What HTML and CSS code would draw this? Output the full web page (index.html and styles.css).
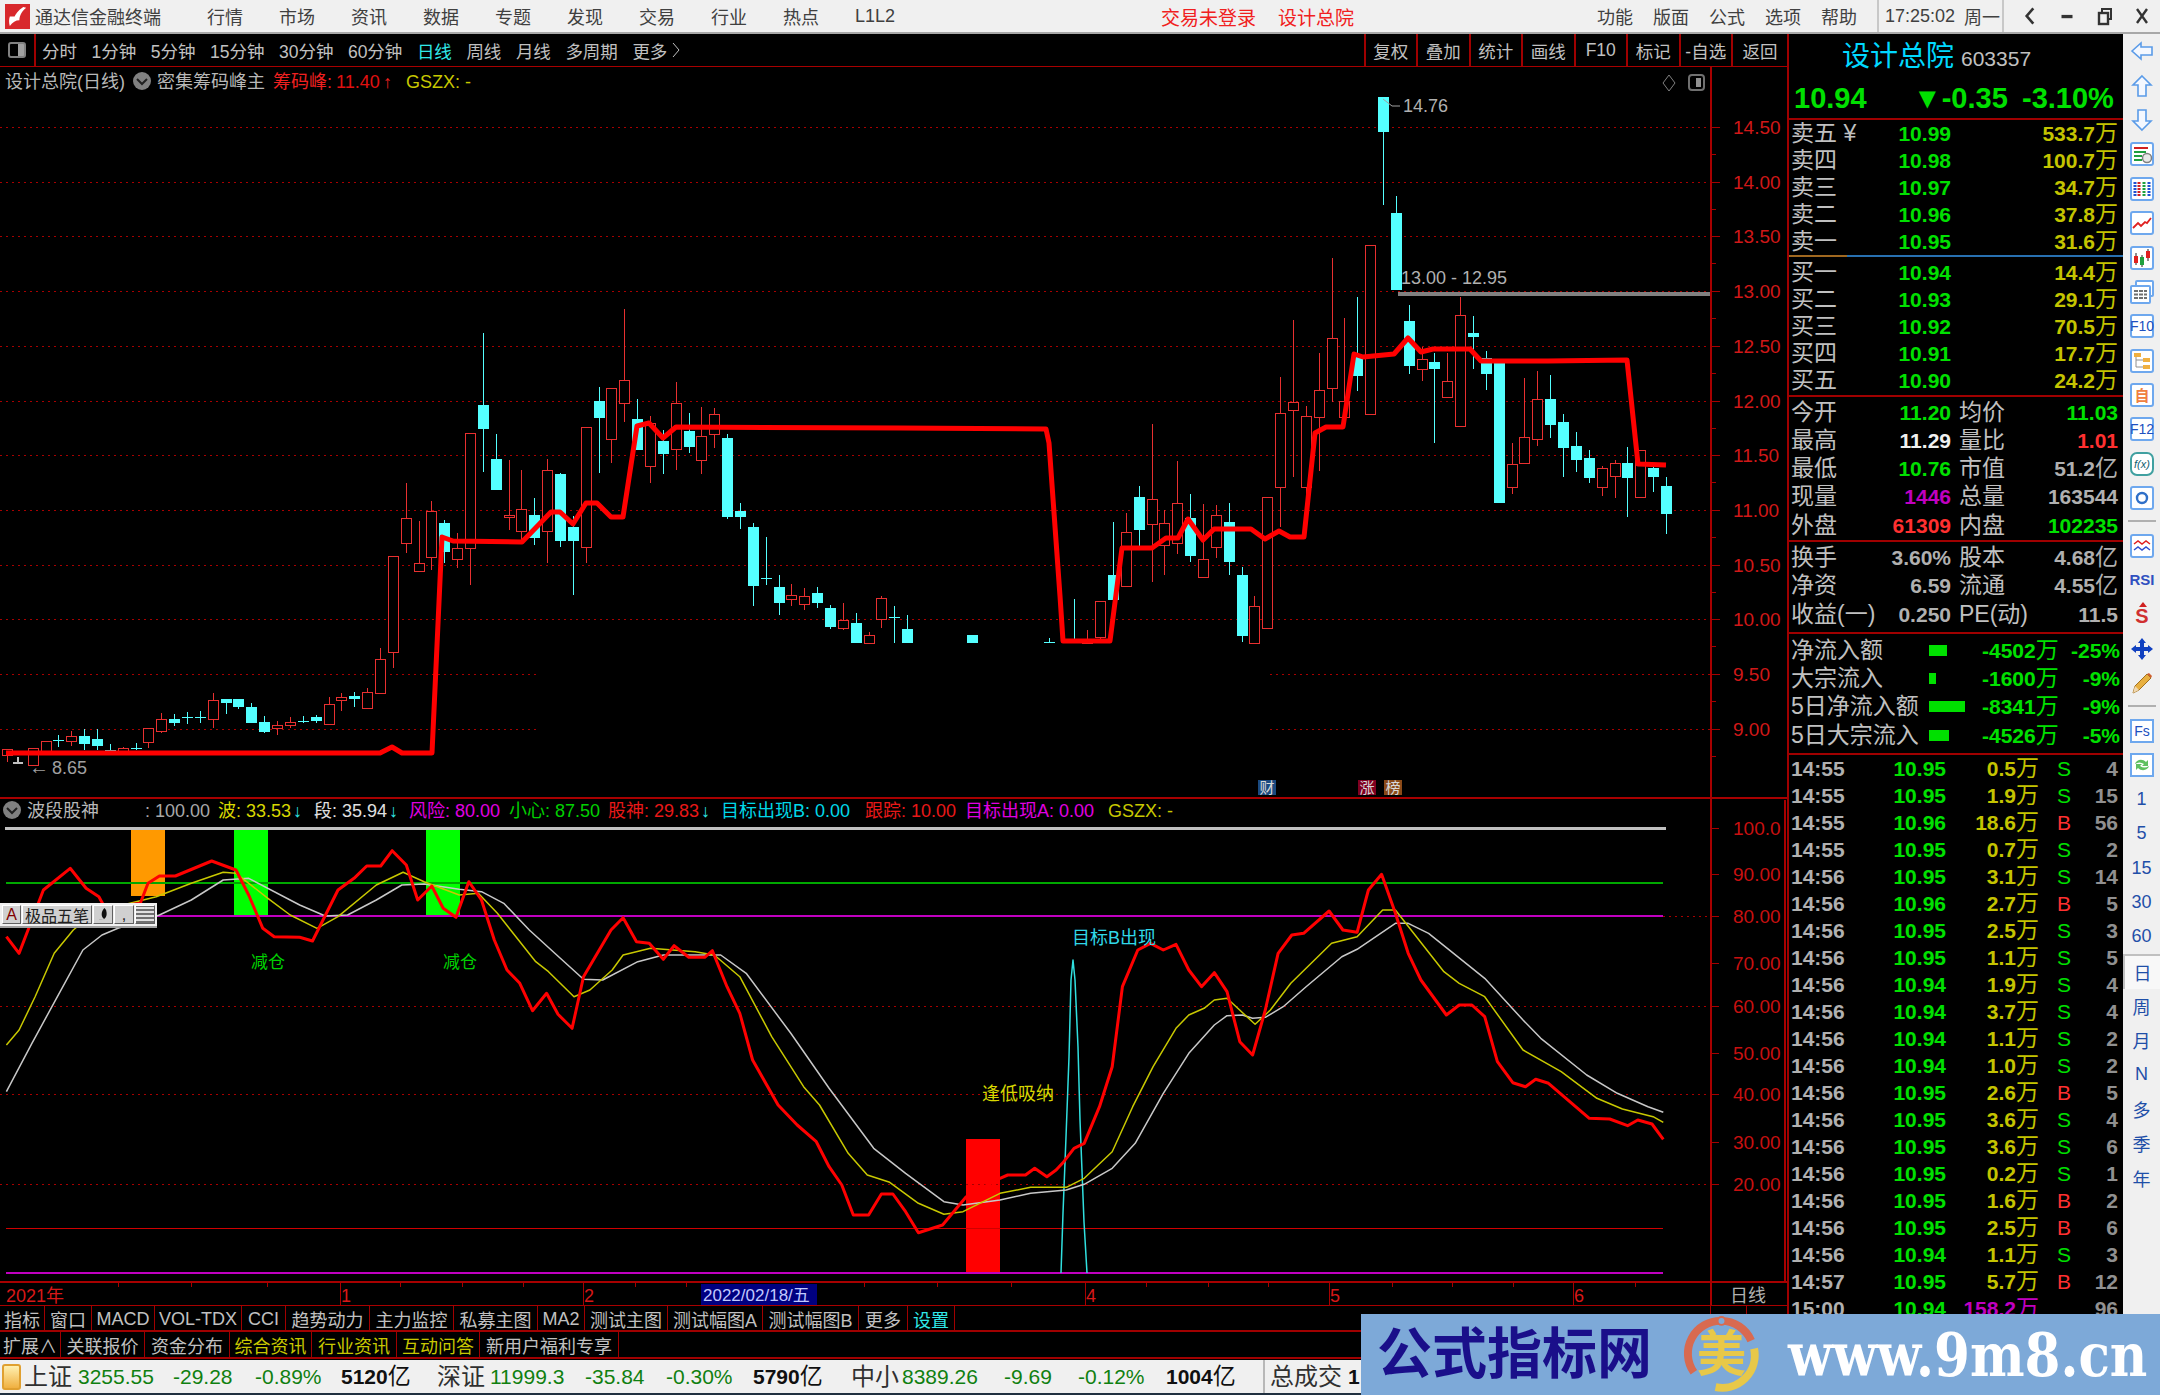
FILE: index.html
```html
<!DOCTYPE html>
<html lang="zh-CN">
<head>
    <meta charset="UTF-8">
    <title>通达信金融终端</title>
    <link rel="stylesheet" href="styles.css">
</head>
<body>
<div class="app">
    <header class="menubar">
        <div class="brand">
            <svg class="brand-logo" viewBox="0 0 26 26"><rect width="26" height="26" fill="#d8282c"/><path d="M19 3 C13 7 11 11 10 13 L5 13 C4 16 4 19 5 23 C8 19 11 17 15 17 C15 14 16 9 22 4 Z" fill="#fff"/></svg>
            <span>通达信金融终端</span>
        </div>
        <nav class="menu-main">
            <span>行情</span><span>市场</span><span>资讯</span><span>数据</span><span>专题</span><span>发现</span><span>交易</span><span>行业</span><span>热点</span><span>L1L2</span>
        </nav>
        <div class="menu-alert"><span>交易未登录</span><span>设计总院</span></div>
        <div class="menu-right">
            <span>功能</span><span>版面</span><span>公式</span><span>选项</span><span>帮助</span>
            <div class="clock"><span>17:25:02</span><span>周一</span></div>
            <div class="win-btns">
                <svg viewBox="0 0 14 20"><path d="M10 3 L4 10 L10 17" fill="none" stroke="#333" stroke-width="2.4"/></svg>
                <svg viewBox="0 0 14 20"><rect x="2" y="9" width="10" height="3" fill="#333"/></svg>
                <svg viewBox="0 0 16 20"><rect x="5" y="3" width="9" height="10" fill="none" stroke="#333" stroke-width="2"/><rect x="2" y="7" width="9" height="11" fill="#f0f0f0" stroke="#333" stroke-width="2.4"/></svg>
                <svg viewBox="0 0 16 20"><path d="M3 3 L13 17 M13 3 L3 17" stroke="#333" stroke-width="2.4"/></svg>
            </div>
        </div>
    </header>

    <div class="main">
        <div class="left">
            <div class="toolbar">
                <div class="toggle"><span class="toggle-box"></span></div>
                <div class="periods">
                    <span>分时</span><span>1分钟</span><span>5分钟</span><span>15分钟</span><span>30分钟</span><span>60分钟</span><span class="cyan">日线</span><span>周线</span><span>月线</span><span>多周期</span>
                    <span class="more">更多<svg viewBox="0 0 8 16"><path d="M1 1 L7 8 L1 15" fill="none" stroke="#c0c0c0"/></svg></span>
                </div>
                <div class="tools">
                    <span>复权</span><span>叠加</span><span>统计</span><span>画线</span><span>F10</span><span>标记</span><span>-自选</span><span class="last">返回</span>
                </div>
            </div>
            <div class="charts">
                <svg id="chart" viewBox="0 66 1787 1240" width="1787" height="1240"></svg>
                <div class="ime">
                    <span class="ime-a">A</span><span class="ime-name">极品五笔</span>
                    <span class="ime-btn"><svg viewBox="0 0 12 16"><path d="M7 1 C3 5 3 11 7 13 C4 14 2 14 1 13 C6 15 11 12 9 4 C9 3 8 2 7 1 Z" fill="#101010"/></svg></span>
                    <span class="ime-btn">,</span><span class="ime-btn ime-kb"></span>
                </div>
            </div>
            <div class="tabs tabs-one">
                <span>指标</span><span>窗口</span><span>MACD</span><span>VOL-TDX</span><span>CCI</span><span>趋势动力</span><span>主力监控</span><span>私募主图</span><span>MA2</span><span>测试主图</span><span>测试幅图A</span><span>测试幅图B</span><span>更多</span><span class="cyan">设置</span><i></i><span></span><span></span>
            </div>
            <div class="tabs tabs-two">
                <span>扩展∧</span><span>关联报价</span><span>资金分布</span><span class="yellow">综合资讯</span><span class="yellow">行业资讯</span><span class="yellow">互动问答</span><span>新用户福利专享</span>
            </div>
        </div>

        <aside class="panel">
            <section class="quote-head">
                <div class="quote-name"><span class="quote-title">设计总院</span><span class="quote-code">603357</span></div>
                <div class="quote-price"><span>10.94</span><span>▼-0.35</span><span>-3.10%</span></div>
            </section>
            <section class="book">
                <div class="row"><span>卖五 ¥</span><b class="g">10.99</b><i></i><b class="y">533.7<u>万</u></b></div>
                <div class="row"><span>卖四</span><b class="g">10.98</b><i></i><b class="y">100.7<u>万</u></b></div>
                <div class="row"><span>卖三</span><b class="g">10.97</b><i></i><b class="y">34.7<u>万</u></b></div>
                <div class="row"><span>卖二</span><b class="g">10.96</b><i></i><b class="y">37.8<u>万</u></b></div>
                <div class="row"><span>卖一</span><b class="g">10.95</b><i></i><b class="y">31.6<u>万</u></b></div>
            </section>
            <div class="book-line"></div>
            <section class="book book-buy">
                <div class="row"><span>买一</span><b class="g">10.94</b><i></i><b class="y">14.4<u>万</u></b></div>
                <div class="row"><span>买二</span><b class="g">10.93</b><i></i><b class="y">29.1<u>万</u></b></div>
                <div class="row"><span>买三</span><b class="g">10.92</b><i></i><b class="y">70.5<u>万</u></b></div>
                <div class="row"><span>买四</span><b class="g">10.91</b><i></i><b class="y">17.7<u>万</u></b></div>
                <div class="row"><span>买五</span><b class="g">10.90</b><i></i><b class="y">24.2<u>万</u></b></div>
            </section>
            <section class="stats">
                <div class="row"><span>今开</span><b class="g">11.20</b><span>均价</span><b class="g">11.03</b></div>
                <div class="row"><span>最高</span><b class="w">11.29</b><span>量比</span><b class="r">1.01</b></div>
                <div class="row"><span>最低</span><b class="g">10.76</b><span>市值</span><b class="s">51.2<u>亿</u></b></div>
                <div class="row"><span>现量</span><b class="m">1446</b><span>总量</span><b class="s">163544</b></div>
                <div class="row"><span>外盘</span><b class="r">61309</b><span>内盘</span><b class="g">102235</b></div>
            </section>
            <section class="finance">
                <div class="row"><span>换手</span><b class="s">3.60%</b><span>股本</span><b class="s">4.68<u>亿</u></b></div>
                <div class="row"><span>净资</span><b class="s">6.59</b><span>流通</span><b class="s">4.55<u>亿</u></b></div>
                <div class="row"><span>收益(一)</span><b class="s">0.250</b><span>PE(动)</span><b class="s">11.5</b></div>
            </section>
            <section class="flows">
                <div class="flow"><span>净流入额</span><em><i style="width:18px"></i></em><b class="g">-4502<u>万</u></b><b class="g">-25%</b></div>
                <div class="flow"><span>大宗流入</span><em><i style="width:7px"></i></em><b class="g">-1600<u>万</u></b><b class="g">-9%</b></div>
                <div class="flow"><span>5日净流入额</span><em><i style="width:36px"></i></em><b class="g">-8341<u>万</u></b><b class="g">-9%</b></div>
                <div class="flow"><span>5日大宗流入</span><em><i style="width:20px"></i></em><b class="g">-4526<u>万</u></b><b class="g">-5%</b></div>
            </section>
            <section class="ticks" id="ticks"></section>
        </aside>

        <aside class="strip">
            <span class="ico"><svg viewBox="0 0 24 24"><path class="arrow" d="M2 12 L11 4 V8 H22 V16 H11 V20 Z"/></svg></span>
            <span class="ico"><svg viewBox="0 0 24 24"><path class="arrow" d="M12 2 L21 11 H16 V22 H8 V11 H3 Z"/></svg></span>
            <span class="ico"><svg viewBox="0 0 24 24"><path class="arrow" d="M12 22 L21 13 H16 V2 H8 V13 H3 Z"/></svg></span>
            <span class="ico"><svg viewBox="0 0 24 24"><rect class="frame" x="1" y="1" width="22" height="22" rx="2"/><path d="M4 6 H18" stroke="#d02020" stroke-width="2"/><path d="M4 10 H16 M4 14 H12 M4 18 H12" stroke="#20a040" stroke-width="2"/><circle cx="17" cy="16" r="4.5" fill="#e8e8e8" stroke="#808080" stroke-width="1.5"/></svg></span>
            <span class="ico"><svg viewBox="0 0 24 24"><rect class="frame" x="1" y="1" width="22" height="22" rx="2"/><path d="M5 5 V19" stroke="#2050d0" stroke-width="3" stroke-dasharray="2 1"/><path d="M9 5 V19" stroke="#d02020" stroke-width="3" stroke-dasharray="2 1"/><path d="M14 5 V19" stroke="#20a040" stroke-width="3" stroke-dasharray="2 1"/><path d="M19 5 V19" stroke="#2050d0" stroke-width="3" stroke-dasharray="2 1"/></svg></span>
            <span class="ico"><svg viewBox="0 0 24 24"><rect class="frame" x="1" y="1" width="22" height="22" rx="2"/><path d="M3 17 L8 12 L11 15 L15 11 L17 12 L21 7" fill="none" stroke="#e02020" stroke-width="1.8"/></svg></span>
            <span class="ico"><svg viewBox="0 0 24 24"><rect class="frame" x="1" y="1" width="22" height="22" rx="2"/><path d="M6 7 V19 M12 9 V21 M18 3 V15" stroke="#202020" stroke-width="1"/><rect x="4" y="10" width="4" height="7" fill="#e02020"/><rect x="10" y="11" width="4" height="8" fill="#20a040"/><rect x="16" y="5" width="4" height="7" fill="#e02020"/></svg></span>
            <span class="ico"><svg viewBox="0 0 24 24"><rect class="frame" x="6" y="1" width="17" height="15" rx="1"/><rect class="frame" x="1" y="6" width="19" height="17" rx="1"/><path d="M4 11 H17 M4 14.5 H17 M4 18 H17" stroke="#707070" stroke-width="2" stroke-dasharray="4 1"/></svg></span>
            <span class="ico"><svg viewBox="0 0 24 24"><rect class="frame" x="1" y="1" width="22" height="22" rx="2"/><text x="12" y="17" class="ico-text">F10</text></svg></span>
            <span class="ico"><svg viewBox="0 0 24 24"><rect class="frame" x="1" y="1" width="22" height="22" rx="2"/><path d="M6 6 V18 H13 M6 11 H13" fill="none" stroke="#909090" stroke-width="1"/><rect x="4" y="4" width="7" height="4" fill="#f0b040"/><rect x="13" y="9" width="7" height="4" fill="#f0b040"/><rect x="13" y="16" width="7" height="4" fill="#f0b040"/></svg></span>
            <span class="ico"><svg viewBox="0 0 24 24"><rect class="frame" x="1" y="1" width="22" height="22" rx="2"/><text x="12" y="18" class="ico-text ico-orange">自</text></svg></span>
            <span class="ico"><svg viewBox="0 0 24 24"><rect class="frame" x="1" y="1" width="22" height="22" rx="2"/><text x="12" y="17" class="ico-text">F12</text></svg></span>
            <span class="ico"><svg viewBox="0 0 24 24"><rect class="frame frame-teal" x="1" y="1" width="22" height="22" rx="6"/><text x="12" y="16" class="ico-text ico-fx">f(x)</text></svg></span>
            <span class="ico"><svg viewBox="0 0 24 24"><rect class="frame" x="1" y="1" width="22" height="22" rx="2"/><circle cx="12" cy="12" r="5" fill="none" stroke="#3070c8" stroke-width="2.4"/></svg></span>
            <span class="strip-sep"></span>
            <span class="ico"><svg viewBox="0 0 24 24"><rect class="frame" x="1" y="1" width="22" height="22" rx="2"/><path d="M4 10 L8 7 L12 10 L16 7 L20 10" fill="none" stroke="#e02020" stroke-width="1.5"/><path d="M4 16 L8 13 L12 16 L16 13 L20 16" fill="none" stroke="#3050d0" stroke-width="1.5"/></svg></span>
            <span class="ico"><svg viewBox="0 0 24 24"><text x="12" y="17" class="ico-text ico-rsi">RSI</text></svg></span>
            <span class="ico"><svg viewBox="0 0 24 24"><path d="M13 0 L17 5 H9 Z" fill="#d02020"/><text x="12" y="21" class="ico-text ico-s">S</text></svg></span>
            <span class="ico"><svg viewBox="0 0 24 24"><path d="M12 1 L16 6 H14 V10 H18 V8 L23 12 L18 16 V14 H14 V18 H16 L12 23 L8 18 H10 V14 H6 V16 L1 12 L6 8 V10 H10 V6 H8 Z" fill="#1040c0"/></svg></span>
            <span class="ico"><svg viewBox="0 0 24 24"><path d="M3 22 L5 15 L17 3 L21 7 L9 19 Z" fill="#e8b040" stroke="#a07020"/><path d="M3 22 L5 15 L9 19 Z" fill="#f0d8b0"/><path d="M17 3 L21 7 L22 5 L19 2 Z" fill="#d06030"/></svg></span>
            <span class="strip-sep"></span>
            <span class="ico"><svg viewBox="0 0 24 24"><rect class="frame" x="1" y="1" width="22" height="22"/><text x="12" y="17" class="ico-text">Fs</text></svg></span>
            <span class="ico"><svg viewBox="0 0 24 24"><rect class="frame" x="1" y="1" width="22" height="22"/><path d="M5 11 C6 7 12 5 16 9 L18 7 V13 H12 L14 11 C11 9 8 9 5 11 Z M19 13 C18 17 12 19 8 15 L6 17 V11 H12 L10 13 C13 15 16 15 19 13 Z" fill="#60c060"/></svg></span>
            <span class="ico-t">1</span>
            <span class="ico-t">5</span>
            <span class="ico-t">15</span>
            <span class="ico-t">30</span>
            <span class="ico-t">60</span>
            <span class="ico-t ico-on">日</span>
            <span class="ico-t">周</span>
            <span class="ico-t">月</span>
            <span class="ico-t">N</span>
            <span class="ico-t">多</span>
            <span class="ico-t">季</span>
            <span class="ico-t">年</span>
        </aside>
    </div>

    <footer class="status">
        <span class="status-icon"></span>
        <span class="idx">上证</span><span class="up">3255.55</span><span class="up">-29.28</span><span class="up">-0.89%</span><span class="amt">5120<u>亿</u></span>
        <span class="idx">深证</span><span class="up">11999.3</span><span class="up">-35.84</span><span class="up">-0.30%</span><span class="amt">5790<u>亿</u></span>
        <span class="idx">中小</span><span class="up">8389.26</span><span class="up">-9.69</span><span class="up">-0.12%</span><span class="amt">1004<u>亿</u></span>
        <span class="status-sep"></span>
        <span class="idx">总成交</span><span class="amt">1</span>
    </footer>

    <div class="watermark">
        <span class="wm-title">公式指标网</span>
        <svg class="wm-logo" viewBox="0 0 80 80">
            <path d="M12 58 A33 33 0 0 1 40 6 A33 33 0 0 1 70 26" fill="none" stroke="#d86a50" stroke-width="8"/>
            <path d="M73 34 A33 33 0 0 1 34 73" fill="none" stroke="#e8c848" stroke-width="8"/>
            <circle cx="40" cy="6" r="4" fill="#7da9d8" stroke="#d86a50" stroke-width="2"/>
            <text x="40" y="57" class="wm-glyph">美</text>
        </svg>
        <span class="wm-url">www.9m8.cn</span>
    </div>
</div>
<script src="chart.js"></script>
</body>
</html>
```

FILE: styles.css
```css
* {
    box-sizing: border-box;
}
body {
    margin: 0;
    background: #000;
    font-family: "Liberation Sans", "Noto Sans CJK SC", sans-serif;
    color: #c0c0c0;
    overflow: hidden;
}
.app {
    position: relative;
    width: 2160px;
    height: 1395px;
    overflow: hidden;
}
.cyan { color: #30e8e8; }
.yellow { color: #c8c800; }

/* top menu */
.menubar {
    display: flex;
    align-items: center;
    height: 34px;
    background: #f0f0f0;
    border-bottom: 2px solid #a8a8a8;
    color: #404040;
    font-size: 18px;
}
.brand {
    display: flex;
    align-items: center;
    gap: 5px;
    width: 207px;
    padding-left: 5px;
}
.brand-logo {
    width: 25px;
    height: 25px;
}
.menu-main {
    display: flex;
    align-items: center;
    width: 954px;
}
.menu-main span {
    width: 72px;
}
.menu-alert {
    display: flex;
    gap: 22px;
    color: #f02020;
    font-size: 19px;
}
.menu-right {
    display: flex;
    align-items: center;
    margin-left: auto;
    width: 563px;
    height: 100%;
}
.menu-right > span {
    width: 56px;
}
.clock {
    display: flex;
    align-items: center;
    gap: 9px;
    width: 127px;
    height: 100%;
    padding-left: 6px;
    border-left: 2px solid #c8c8c8;
    border-right: 2px solid #c8c8c8;
    white-space: nowrap;
}
.win-btns {
    display: flex;
    justify-content: space-between;
    flex: 1;
    padding: 0 10px 0 18px;
}
.win-btns svg {
    width: 16px;
    height: 22px;
}

.main {
    display: flex;
    height: 1326px;
}
.left {
    width: 1787px;
}

/* period toolbar */
.toolbar {
    display: flex;
    height: 32px;
    font-size: 17.5px;
}
.toggle {
    display: flex;
    align-items: center;
    justify-content: center;
    width: 36px;
    border-right: 2px solid #a00000;
}
.toggle-box {
    width: 18px;
    height: 16px;
    border: 2px solid #808080;
    border-radius: 3px;
    background: linear-gradient(90deg, #000 55%, #a0a0a0 55%);
}
.periods {
    display: flex;
    align-items: center;
    gap: 14.5px;
    padding-left: 6px;
    white-space: nowrap;
}
.more {
    display: flex;
    align-items: center;
    gap: 5px;
}
.more svg {
    width: 8px;
    height: 16px;
}
.tools {
    display: flex;
    margin-left: auto;
    height: 100%;
}
.tools span {
    display: flex;
    align-items: center;
    justify-content: center;
    width: 52.5px;
    border-left: 2px solid #a00000;
    white-space: nowrap;
}
.tools .last {
    width: 56px;
}

.charts {
    position: relative;
    height: 1240px;
}
#chart {
    display: block;
}
#chart text {
    font-family: "Liberation Sans", "Noto Sans CJK SC", sans-serif;
}

/* input method widget lying over the chart */
.ime {
    position: absolute;
    left: 0;
    top: 837px;
    display: flex;
    align-items: center;
    width: 157px;
    height: 25px;
    padding: 2px;
    gap: 1px;
    background: #f0f0f0;
    border-bottom: 2px solid #a0a0a0;
    color: #202020;
    font-size: 16px;
}
.ime span {
    display: flex;
    align-items: center;
    justify-content: center;
    height: 100%;
    background: #d0d0d0;
    border-top: 1px solid #fff;
    border-left: 1px solid #fff;
    border-right: 1px solid #606060;
    border-bottom: 1px solid #606060;
}
.ime-a {
    width: 19px;
    color: #800000;
}
.ime-name {
    width: 70px;
    white-space: nowrap;
}
.ime-btn {
    width: 20px;
    line-height: 1;
}
.ime-btn svg {
    width: 11px;
    height: 15px;
}
.ime .ime-kb {
    background: repeating-linear-gradient(0deg, #707070 0 2px, #e0e0e0 2px 4px);
}

/* tab rows under the chart */
.tabs {
    display: grid;
    font-size: 18px;
    border-bottom: 2px solid #a00000;
    white-space: nowrap;
}
.tabs-one {
    grid-template-columns: 45px 47px 63px 87px 44px 84px 84px 84px 47px 83px 95px 96px 49px 47px 711px 45px 36px;
    height: 26px;
}
.tabs-two {
    grid-template-columns: 61px 84px 85px 82px 85px 83px 139px;
    height: 27px;
}
.tabs span {
    display: flex;
    align-items: center;
    justify-content: center;
    border-right: 1.5px solid #a00000;
}

/* quote panel */
.panel {
    width: 336px;
    border-left: 2px solid #a00000;
    font-size: 21px;
    white-space: nowrap;
}
.panel section {
    padding-left: 2px;
}
.panel b {
    font-weight: 700;
    text-align: right;
    line-height: 1;
}
.panel u,
.status u {
    text-decoration: none;
    font-weight: 400;
    font-size: 23px;
    line-height: 1;
}
.panel i {
    font-style: normal;
}
.row {
    display: grid;
    grid-template-columns: 60px 100px 68px 99px;
    align-items: center;
    font-size: 21px;
}
.row > span {
    font-size: 23px;
    line-height: 1;
}
.row > span:nth-child(3) {
    margin-left: 8px;
    width: 60px;
}
.g { color: #00e000; }
.y { color: #c4c400; }
.r { color: #ff3030; }
.m { color: #c000c0; }
.w { color: #f0f0f0; }
.s { color: #b0b0b0; }
.quote-head {
    height: 86px;
    border-bottom: 2px solid #a00000;
}
.quote-name {
    display: flex;
    align-items: baseline;
    gap: 7px;
    height: 50px;
    padding-left: 51px;
}
.quote-title {
    color: #00d8ff;
    font-size: 28px;
}
.quote-code {
    font-size: 21px;
}
.quote-price {
    display: flex;
    height: 28px;
    align-items: center;
    padding-left: 3px;
    color: #00e000;
    font-size: 29px;
    font-weight: 700;
}
.quote-price span:nth-child(1) { width: 119px; }
.quote-price span:nth-child(2) { width: 109px; }
.book {
    height: 135px;
}
.book .row {
    height: 27px;
}
.book-line {
    height: 2px;
    background: linear-gradient(90deg, #a06820 58px, #2870b0 58px);
}
.book-buy {
    height: 140px;
    padding-top: 1.5px;
    border-bottom: 2px solid #a00000;
}
.stats {
    height: 145px;
    padding-top: 1px;
    border-bottom: 2px solid #a00000;
}
.stats .row {
    height: 28.25px;
}
.finance {
    height: 92px;
    padding-top: 1px;
    border-bottom: 2px solid #a00000;
}
.finance .row {
    height: 28.5px;
}
.flows {
    height: 121px;
    padding-top: 2px;
    border-bottom: 2px solid #a00000;
}
.flow {
    display: grid;
    grid-template-columns: 138px 53px 75px 63px;
    align-items: center;
    height: 28.3px;
}
.flow > span {
    font-size: 23px;
    line-height: 1;
}
.flow em {
    display: block;
}
.flow em i {
    display: block;
    height: 11px;
    background: #00e000;
}
.ticks {
    height: 571px;
    overflow: hidden;
}
.tick {
    display: grid;
    grid-template-columns: 60px 95px 93px 50px 29px;
    align-items: center;
    height: 27px;
}
.tick b:first-child {
    text-align: left;
    color: #b0b0b0;
}
.tick .flag {
    text-align: center;
}
.tick .cnt {
    color: #909090;
}

/* right icon strip */
.strip {
    display: flex;
    flex-direction: column;
    align-items: center;
    width: 37px;
    background: #f0f0f0;
}
.ico,
.ico-t {
    display: flex;
    align-items: center;
    justify-content: center;
    flex: none;
    width: 37px;
    height: 34.4px;
}
.ico svg {
    width: 24px;
    height: 24px;
    overflow: visible;
}
.ico-t {
    color: #1f4fa8;
    font-size: 18px;
}
.ico-on {
    background: #f8f8f8;
    border-top: 2px solid #c0c0c0;
    border-left: 2px solid #c0c0c0;
}
.strip-sep {
    flex: none;
    width: 28px;
    height: 2px;
    margin: 5px 0 6px;
    background: #b0b0b0;
}
.arrow {
    fill: #f4f8ff;
    stroke: #5a9be8;
    stroke-width: 1.6;
}
.frame {
    fill: #fff;
    stroke: #6ea8ee;
    stroke-width: 2;
}
.frame-teal {
    stroke: #40a0a0;
}
.ico-text {
    text-anchor: middle;
    font-size: 14px;
    fill: #2050c0;
    font-family: "Liberation Sans", "Noto Sans CJK SC", sans-serif;
}
.ico-orange {
    font-size: 15px;
    font-weight: 700;
    fill: #f08040;
}
.ico-fx {
    font-size: 11px;
    font-style: italic;
    fill: #106070;
}
.ico-rsi {
    font-size: 15px;
    font-weight: 700;
    fill: #3050c0;
}
.ico-s {
    font-size: 20px;
    font-weight: 700;
    fill: #d03030;
}

/* index bar */
.status {
    display: grid;
    grid-template-columns: 24px 54px 95px 82px 86px 96px 53px 95px 81px 87px 98px 51px 102px 74px 88px 97px 7px 78px 20px;
    align-items: center;
    height: 35px;
    background: #f0f0f0;
    border-bottom: 2px solid #203040;
    color: #101010;
    font-size: 21px;
    line-height: 1;
    white-space: nowrap;
}
.status-icon {
    width: 19px;
    height: 26px;
    margin-left: 2px;
    border: 2px solid #e0a030;
    border-radius: 3px;
    background: linear-gradient(#fff0b0, #f0b040);
}
.idx {
    font-size: 24px;
    color: #303030;
}
.up {
    color: #108010;
}
.amt {
    font-weight: 700;
}
.status-sep {
    width: 2px;
    height: 100%;
    background: #b8b8b8;
}

/* site banner lying over the bottom right corner */
.watermark {
    position: absolute;
    left: 1361px;
    top: 1314px;
    display: flex;
    align-items: center;
    width: 799px;
    height: 81px;
    background: #7da9d8;
}
.wm-title {
    flex: none;
    width: 321px;
    padding-left: 16px;
    color: #1a0f8a;
    font-size: 55px;
    font-weight: 700;
    line-height: 1;
    white-space: nowrap;
}
.wm-logo {
    flex: none;
    width: 79px;
    height: 79px;
}
.wm-glyph {
    text-anchor: middle;
    font-size: 50px;
    font-weight: 700;
    fill: #e8c848;
    font-family: "Noto Sans CJK SC", sans-serif;
}
.wm-url {
    flex: none;
    margin-left: 27px;
    color: #fff;
    font-family: "DejaVu Serif", serif;
    font-size: 60px;
    font-weight: 700;
    line-height: 1;
    white-space: nowrap;
    transform: scaleX(.86);
    transform-origin: left center;
}
```

FILE: chart.js
```js
const svg = document.getElementById('chart');
const NS = 'http://www.w3.org/2000/svg';

function el(tag, attrs, text) {
    const node = document.createElementNS(NS, tag);
    for (const k in attrs) node.setAttribute(k, attrs[k]);
    if (text !== undefined) node.textContent = text;
    svg.appendChild(node);
    return node;
}
function line(x1, y1, x2, y2, stroke, width, dash) {
    const a = { x1, y1, x2, y2, stroke, 'stroke-width': width || 1, 'shape-rendering': 'crispEdges' };
    if (dash) a['stroke-dasharray'] = dash;
    el('line', a);
}
function label(x, y, str, fill, size, anchor) {
    el('text', { x, y, fill, 'font-size': size || 18, 'text-anchor': anchor || 'start', 'dominant-baseline': 'central' }, str);
}
function curve(points, stroke, width) {
    el('polyline', { points: points.map(p => p.join(',')).join(' '), fill: 'none', stroke, 'stroke-width': width, 'stroke-linejoin': 'round' });
}

const RED = '#a80000';
const CYAN = '#54ffff';
const CANDLE_RED = '#e83030';

// frames
line(0, 66, 1787, 66, RED, 2);
line(0, 798, 1787, 798, RED, 2);
line(0, 1282, 1787, 1282, RED, 2);
line(0, 1306, 1787, 1306, RED, 2);
line(1711, 66, 1711, 1306, RED, 2);
line(1785, 800, 1785, 1282, RED, 2);

// price grid and axis
const prices = [14.5, 14, 13.5, 13, 12.5, 12, 11.5, 11, 10.5, 10, 9.5, 9];
const priceY = p => 127 + (14.5 - p) * 109.4;
prices.forEach(p => {
    const y = Math.round(priceY(p));
    if (p < 10) {
        line(0, y, 537, y, RED, 1, '2 4');
        line(1270, y, 1711, y, RED, 1, '2 4');
    } else {
        line(0, y, 1711, y, RED, 1, '2 4');
    }
    line(1711, y, 1720, y, RED, 1);
    line(1711, y + 27, 1716, y + 27, RED, 1);
    label(1733, y, p.toFixed(2), '#d01818', 19);
});

// candles: index, high, body top, body bottom, low, colour
const candles = [
    [0, 749, 749, 755, 762, 'r'], [2, 748, 748, 765, 765, 'r'], [3, 741, 741, 752, 752, 'r'], [4, 735, 740, 741, 747, 'c'],
    [5, 731, 736, 741, 746, 'r'], [6, 729, 736, 744, 750, 'c'], [7, 729, 739, 746, 750, 'c'], [8, 744, 750, 750, 750, 'c'],
    [9, 747, 748, 752, 752, 'r'], [10, 743, 748, 749, 750, 'c'], [11, 728, 728, 742, 748, 'r'], [12, 713, 719, 731, 733, 'r'],
    [13, 714, 719, 723, 726, 'c'], [14, 712, 717, 718, 724, 'c'], [15, 711, 717, 718, 723, 'c'], [16, 693, 700, 719, 728, 'r'],
    [17, 699, 699, 703, 714, 'c'], [18, 699, 699, 707, 709, 'c'], [19, 703, 707, 723, 723, 'c'], [20, 716, 722, 732, 733, 'c'],
    [21, 721, 725, 728, 735, 'r'], [22, 717, 722, 725, 728, 'r'], [23, 716, 721, 722, 723, 'c'], [24, 715, 717, 721, 723, 'c'],
    [25, 697, 704, 724, 724, 'r'], [26, 693, 697, 700, 711, 'r'], [27, 692, 696, 699, 707, 'c'], [28, 688, 692, 708, 708, 'r'],
    [29, 648, 659, 693, 693, 'r'], [30, 556, 556, 652, 668, 'r'], [31, 483, 518, 543, 553, 'r'], [32, 521, 563, 571, 571, 'r'],
    [33, 501, 511, 557, 570, 'r'], [34, 520, 523, 552, 563, 'c'], [35, 533, 548, 559, 568, 'r'], [36, 433, 433, 548, 585, 'r'],
    [37, 333, 405, 429, 472, 'c'], [38, 434, 459, 490, 490, 'c'], [39, 460, 515, 517, 530, 'r'], [40, 470, 509, 531, 540, 'r'],
    [41, 498, 515, 538, 545, 'c'], [42, 459, 470, 531, 563, 'r'], [43, 473, 474, 541, 547, 'c'], [44, 516, 527, 541, 595, 'c'],
    [45, 427, 427, 547, 563, 'r'], [46, 387, 401, 418, 473, 'c'], [47, 388, 388, 439, 463, 'r'], [48, 309, 380, 403, 422, 'r'],
    [49, 399, 419, 450, 450, 'c'], [50, 416, 423, 466, 483, 'r'], [51, 430, 441, 454, 474, 'c'], [52, 382, 403, 449, 470, 'r'],
    [53, 413, 431, 447, 453, 'c'], [54, 407, 436, 460, 474, 'r'], [55, 408, 414, 434, 448, 'r'], [56, 434, 438, 517, 519, 'c'],
    [57, 503, 511, 517, 529, 'c'], [58, 523, 527, 586, 606, 'c'], [59, 537, 578, 579, 585, 'c'], [60, 575, 587, 603, 615, 'c'],
    [61, 584, 595, 599, 606, 'r'], [62, 588, 596, 604, 610, 'r'], [63, 587, 593, 603, 608, 'c'], [64, 605, 608, 627, 629, 'c'],
    [65, 603, 620, 628, 630, 'r'], [66, 613, 623, 643, 643, 'c'], [67, 632, 635, 643, 643, 'r'], [68, 596, 598, 619, 628, 'r'],
    [69, 606, 617, 618, 643, 'c'], [70, 615, 629, 643, 643, 'c'], [75, 635, 635, 643, 643, 'c'], [81, 638, 642, 643, 643, 'c'],
    [83, 599, 640, 641, 643, 'c'], [84, 630, 640, 643, 643, 'r'], [85, 601, 601, 637, 643, 'r'], [86, 522, 575, 600, 611, 'c'],
    [87, 513, 532, 586, 586, 'r'], [88, 486, 497, 530, 546, 'c'], [89, 424, 499, 524, 582, 'r'], [90, 510, 523, 545, 575, 'r'],
    [91, 461, 503, 543, 554, 'r'], [92, 494, 518, 556, 562, 'c'], [93, 504, 559, 577, 577, 'r'], [94, 505, 515, 547, 558, 'r'],
    [95, 503, 522, 562, 575, 'c'], [96, 567, 575, 636, 642, 'c'], [97, 596, 606, 643, 643, 'r'], [98, 497, 497, 628, 628, 'r'],
    [99, 377, 413, 487, 527, 'r'], [100, 320, 402, 410, 477, 'r'], [101, 406, 416, 487, 500, 'r'], [102, 353, 390, 417, 471, 'r'],
    [103, 258, 338, 388, 402, 'r'], [104, 318, 401, 417, 417, 'r'], [105, 297, 357, 376, 391, 'c'], [106, 245, 245, 414, 414, 'r'],
    [107, 97, 97, 132, 205, 'c'], [108, 196, 213, 290, 290, 'c'], [109, 305, 321, 366, 374, 'c'], [110, 347, 359, 369, 381, 'r'],
    [111, 353, 362, 369, 443, 'c'], [112, 353, 381, 397, 397, 'r'], [113, 297, 315, 426, 426, 'r'], [114, 316, 333, 337, 369, 'c'],
    [115, 351, 358, 374, 390, 'c'], [116, 362, 362, 503, 503, 'c'], [117, 443, 464, 487, 494, 'r'], [118, 378, 437, 463, 463, 'r'],
    [119, 371, 399, 439, 446, 'r'], [120, 375, 399, 425, 438, 'c'], [121, 414, 422, 448, 477, 'c'], [122, 432, 446, 460, 472, 'c'],
    [123, 450, 458, 478, 483, 'c'], [124, 466, 468, 487, 496, 'r'], [125, 460, 463, 476, 498, 'r'], [126, 447, 463, 478, 517, 'c'],
    [127, 450, 450, 497, 497, 'r'], [128, 465, 468, 477, 492, 'c'], [129, 477, 486, 514, 534, 'c']
];
candles.forEach(([i, hi, top, bot, lo, kind]) => {
    const x = Math.round(7 + 12.86 * i);
    const color = kind === 'c' ? CYAN : CANDLE_RED;
    line(x + 0.5, hi, x + 0.5, lo, color, 1);
    if (kind === 'c') {
        el('rect', { x: x - 5, y: top, width: 11, height: Math.max(bot - top, 1), fill: color, 'shape-rendering': 'crispEdges' });
    } else {
        el('rect', { x: x - 4.5, y: top + 0.5, width: 10, height: Math.max(bot - top, 1), fill: '#000', stroke: color, 'shape-rendering': 'crispEdges' });
    }
});
line(18, 757, 18, 763, '#c0c0c0', 2);
line(13, 763, 23, 763, '#c0c0c0', 2);

// chip peak line
curve([[6, 753], [380, 753], [392, 747], [402, 753], [432, 753], [436, 667], [442, 537], [453, 541], [522, 542], [551, 512], [560, 512], [573, 524],
    [586, 503], [597, 503], [611, 517], [623, 517], [637, 426], [649, 423], [663, 438], [676, 427], [900, 428], [1046, 429], [1049, 443],
    [1060, 596], [1063, 641], [1110, 641], [1122, 548], [1152, 548], [1166, 538], [1178, 538], [1188, 519], [1203, 540], [1214, 529], [1251, 529],
    [1265, 539], [1279, 531], [1290, 537], [1304, 537], [1315, 433], [1326, 427], [1343, 427], [1354, 354], [1363, 357], [1394, 354], [1408, 338],
    [1421, 352], [1433, 349], [1470, 349], [1481, 361], [1548, 361], [1627, 360], [1638, 464], [1666, 465]], '#ff0000', 5);

// marks on the price chart
line(1398, 294, 1710, 294, '#808080', 4);
label(1401, 278, '13.00 - 12.95', '#b0b0b0', 18);
label(1403, 106, '14.76', '#b0b0b0', 18);
curve([[1383, 99], [1392, 106], [1400, 106]], '#a0a0a0', 1);
label(52, 768, '8.65', '#a0a0a0', 18);
label(29, 767, '←', '#a0a0a0', 20);
el('path', { d: 'M1669 75 L1675 83 L1669 91 L1663 83 Z', fill: 'none', stroke: '#808080', 'stroke-width': 1 });
el('rect', { x: 1689, y: 75, width: 15, height: 15, rx: 3, fill: '#000', stroke: '#707070', 'stroke-width': 2 });
el('rect', { x: 1696, y: 78, width: 5, height: 9, fill: '#909090' });

// legend of the price chart
label(5, 82, '设计总院(日线)', '#b8b8b8');
el('circle', { cx: 142, cy: 81, r: 9, fill: '#808080' });
el('path', { d: 'M137 79 L142 84 L147 79', fill: 'none', stroke: '#202020', 'stroke-width': 2 });
label(157, 82, '密集筹码峰主', '#b8b8b8');
label(273, 82, '筹码峰:', '#f02020');
label(336, 82, '11.40', '#e01010');
label(383, 82, '↑', '#f02020');
label(406, 82, 'GSZX: -', '#c8c800');

// day marks
[['财', 1258, '#1a4a80'], ['涨', 1358, '#800020'], ['榜', 1384, '#8a4a18']].forEach(([t, x, bg]) => {
    el('rect', { x, y: 780, width: 18, height: 15, fill: bg });
    label(x + 9, 787, t, '#d8d8d8', 15, 'middle');
});

// legend of the oscillator
el('circle', { cx: 12, cy: 810, r: 9, fill: '#808080' });
el('path', { d: 'M7 808 L12 813 L17 808', fill: 'none', stroke: '#202020', 'stroke-width': 2 });
[[27, '波段股神', '#b8b8b8'], [145, ': 100.00', '#a8a8a8'], [218, '波: 33.53', '#d8d800'], [293, '↓', '#30e8e8'], [314, '段: 35.94', '#e0e0e0'], [389, '↓', '#30e8e8'],
    [409, '风险: 80.00', '#e000e0'], [509, '小心: 87.50', '#00d000'], [608, '股神: 29.83', '#e81818'], [701, '↓', '#30e8e8'],
    [721, '目标出现B: 0.00', '#00d8e8'], [865, '跟踪: 10.00', '#e81818'], [965, '目标出现A: 0.00', '#e000e0'], [1108, 'GSZX: -', '#c8c800']]
    .forEach(([x, t, c]) => label(x, 811, t, c));

// oscillator bars and levels
line(5, 828, 1666, 828, '#c0c0c0', 3);
el('rect', { x: 131, y: 830, width: 34, height: 66, fill: '#ff9900' });
el('rect', { x: 234, y: 830, width: 34, height: 86, fill: '#00ff00' });
el('rect', { x: 426, y: 830, width: 34, height: 86, fill: '#00ff00' });
el('rect', { x: 966, y: 1139, width: 34, height: 134, fill: '#ff0000' });
[1006, 1094, 1184].forEach(y => line(0, y, 1711, y, RED, 1, '2 4'));
line(1663, 916, 1711, 916, RED, 1, '2 4');
line(6, 883, 1663, 883, '#00a800', 2);
line(6, 916, 1663, 916, '#c000c0', 2);
line(6, 1228, 1663, 1228, '#d00000', 1);
line(6, 1273, 1663, 1273, '#c000c0', 2);

[[828, '100.0'], [874, '90.00'], [916, '80.00'], [963, '70.00'], [1006, '60.00'], [1053, '50.00'], [1094, '40.00'], [1142, '30.00'], [1184, '20.00']]
    .forEach(([y, t]) => {
        line(1711, y, 1719, y, RED, 1);
        label(1733, y, t, '#c81010', 19);
    });

// curves, read off in picture coordinates
const west = pts => pts.map(([a, b]) => [(a / 1.568).toFixed(1), (780 + b / 3).toFixed(1)]);
const east = pts => pts.map(([a, b]) => [(1000 + a / 1.96).toFixed(1), (780 + b / 3).toFixed(1)]);

const white = west([[10, 935], [50, 790], [90, 650], [130, 510], [160, 465], [185, 445], [250, 405], [300, 360], [350, 300], [390, 295], [470, 375], [510, 408], [545, 405], [590, 360], [630, 315], [665, 312], [720, 328], [755, 335], [790, 370], [830, 450], [870, 520], [915, 598], [945, 600], [1000, 545], [1040, 525], [1130, 525], [1170, 580], [1240, 760], [1300, 925], [1370, 1105], [1420, 1180], [1480, 1265], [1510, 1275]])
    .concat(east([[0, 1260], [60, 1240], [130, 1230], [165, 1213], [220, 1165], [265, 1090], [320, 940], [370, 820], [420, 735], [445, 707], [475, 705], [495, 715], [520, 712], [555, 680], [600, 620], [670, 530], [700, 508], [775, 430], [800, 430], [840, 460], [950, 595], [1025, 720], [1060, 775], [1150, 885], [1210, 940], [1270, 980], [1300, 997]]));
const yellow = west([[10, 795], [30, 750], [55, 650], [85, 520], [115, 450], [150, 395], [245, 350], [300, 310], [350, 277], [370, 280], [420, 355], [455, 405], [497, 445], [530, 410], [590, 315], [632, 277], [665, 305], [720, 345], [750, 340], [780, 400], [840, 545], [860, 575], [900, 650], [925, 630], [960, 570], [977, 525], [1020, 505], [1090, 515], [1120, 525], [1160, 590], [1210, 770], [1260, 920], [1285, 975], [1330, 1120], [1360, 1185], [1395, 1207], [1440, 1270], [1480, 1303], [1510, 1295]])
    .concat(east([[0, 1240], [60, 1222], [130, 1222], [165, 1195], [220, 1115], [260, 980], [300, 860], [345, 745], [370, 705], [400, 685], [420, 660], [445, 655], [500, 733], [530, 690], [570, 610], [650, 490], [700, 470], [750, 390], [775, 390], [870, 575], [900, 610], [950, 650], [1025, 810], [1100, 875], [1170, 955], [1220, 987], [1280, 1010], [1300, 1027]]));
const fast = west([[10, 470], [30, 520], [68, 330], [110, 265], [135, 325], [155, 350], [165, 385], [220, 370], [232, 310], [250, 288], [275, 288], [332, 243], [370, 270], [390, 345], [412, 445], [430, 470], [470, 472], [490, 483], [530, 330], [555, 295], [575, 258], [597, 258], [615, 212], [637, 255], [655, 360], [677, 318], [695, 385], [715, 412], [735, 305], [755, 360], [775, 480], [795, 570], [815, 610], [835, 692], [857, 640], [875, 703], [897, 745], [915, 590], [958, 450], [977, 413], [998, 485], [1018, 490], [1040, 538], [1057, 497], [1080, 532], [1105, 532], [1117, 512], [1140, 620], [1160, 700], [1180, 840], [1220, 975], [1250, 1035], [1280, 1085], [1300, 1160], [1320, 1215], [1338, 1305], [1362, 1305], [1382, 1242], [1400, 1242], [1420, 1295], [1440, 1358], [1478, 1335], [1515, 1250]])
    .concat(east([[0, 1195], [15, 1185], [50, 1185], [68, 1165], [92, 1190], [110, 1170], [125, 1145], [145, 1105], [165, 1090], [195, 980], [220, 860], [240, 620], [270, 510], [295, 490], [320, 510], [345, 493], [370, 570], [395, 620], [420, 578], [445, 635], [470, 785], [495, 825], [520, 690], [545, 520], [572, 465], [595, 460], [645, 393], [672, 450], [700, 457], [722, 330], [748, 283], [775, 400], [800, 520], [825, 600], [875, 705], [900, 675], [925, 675], [950, 710], [975, 845], [1005, 908], [1030, 920], [1050, 898], [1075, 910], [1155, 1015], [1195, 1017], [1230, 1037], [1250, 1020], [1278, 1032], [1300, 1078]]));

curve([[1061, 1273], [1063, 1213], [1066, 1137], [1069, 1057], [1071, 980], [1073, 960], [1075, 980], [1078, 1047], [1080, 1120], [1084, 1222], [1087, 1273]], '#30e0e0', 1.5);
curve(white, '#c8c8c8', 1.5);
curve(yellow, '#c8c800', 1.5);
curve(fast, '#ff0000', 3);

label(251, 962, '减仓', '#00d000', 17);
label(443, 962, '减仓', '#00d000', 17);
label(982, 1094, '逢低吸纳', '#d8d800', 18);
label(1072, 938, '目标B出现', '#30d8e8', 18);

// time axis
[118, 191, 267, 400, 462, 523, 635, 686, 864, 937, 1011, 1146, 1208, 1268, 1392, 1452, 1513, 1635].forEach(x => line(x, 1282, x, 1287, RED, 1));
[[340, '1'], [583, '2'], [1085, '4'], [1329, '5'], [1573, '6']].forEach(([x, t]) => {
    line(x, 1282, x, 1306, RED, 1);
    label(x + 1, 1296, t, '#d81818', 18);
});
label(6, 1296, '2021年', '#d81818', 18);
el('rect', { x: 701, y: 1284, width: 116, height: 21, fill: '#000080' });
label(703, 1295, '2022/02/18/五', '#c0c8ff', 17);
label(1730, 1296, '日线', '#b0b0b0', 18);

// tick list
const ticks = [
    ['14:55', '10.95', '0.5', 'S', 4], ['14:55', '10.95', '1.9', 'S', 15], ['14:55', '10.96', '18.6', 'B', 56], ['14:55', '10.95', '0.7', 'S', 2],
    ['14:56', '10.95', '3.1', 'S', 14], ['14:56', '10.96', '2.7', 'B', 5], ['14:56', '10.95', '2.5', 'S', 3], ['14:56', '10.95', '1.1', 'S', 5],
    ['14:56', '10.94', '1.9', 'S', 4], ['14:56', '10.94', '3.7', 'S', 4], ['14:56', '10.94', '1.1', 'S', 2], ['14:56', '10.94', '1.0', 'S', 2],
    ['14:56', '10.95', '2.6', 'B', 5], ['14:56', '10.95', '3.6', 'S', 4], ['14:56', '10.95', '3.6', 'S', 6], ['14:56', '10.95', '0.2', 'S', 1],
    ['14:56', '10.95', '1.6', 'B', 2], ['14:56', '10.95', '2.5', 'B', 6], ['14:56', '10.94', '1.1', 'S', 3], ['14:57', '10.95', '5.7', 'B', 12],
    ['15:00', '10.94', '158.2', '', 96]
];
const tickBox = document.getElementById('ticks');
ticks.forEach(([time, price, vol, side, count]) => {
    const row = document.createElement('div');
    row.className = 'tick';
    const volClass = side ? 'y' : 'm';
    const sideClass = side === 'B' ? 'r' : 'g';
    row.innerHTML = `<b>${time}</b><b class="g">${price}</b><b class="${volClass}">${vol}<u>万</u></b><span class="flag ${sideClass}">${side}</span><b class="cnt">${count}</b>`;
    tickBox.appendChild(row);
});
```
